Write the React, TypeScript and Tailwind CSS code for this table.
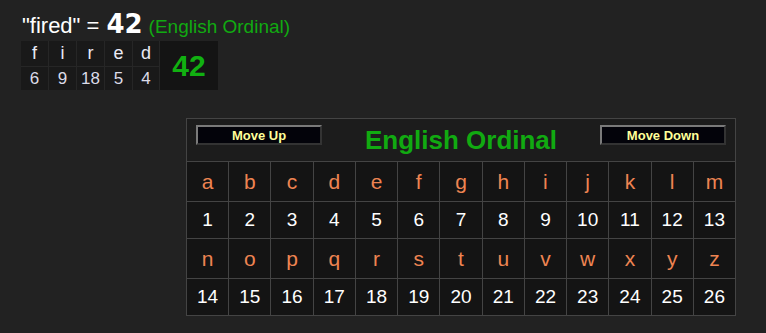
import React from 'react';

const letters = 'abcdefghijklmnopqrstuvwxyz'.split('');
const word = [
  { ch: 'f', v: 6 },
  { ch: 'i', v: 9 },
  { ch: 'r', v: 18 },
  { ch: 'e', v: 5 },
  { ch: 'd', v: 4 },
];

const Row = ({ items, kind }: { items: string[]; kind: 'letter' | 'num' }) => (
  <>
    {items.map((t, i) => (
      <div
        key={kind + i}
        className={
          kind === 'letter'
            ? 'bg-[#141414] h-[39px] flex items-center justify-center text-[21px] text-[#ee8452]'
            : 'bg-[#141414] h-[36px] flex items-center justify-center text-[19px] text-white'
        }
      >
        {t}
      </div>
    ))}
  </>
);

const App = () => {
  const first = letters.slice(0, 13);
  const second = letters.slice(13);
  return (
    <div className="w-[766px] h-[333px] bg-[#222222] text-white font-['Liberation_Sans',Arial,sans-serif] pl-[21px] pt-[5px] overflow-hidden">
      {/* title line */}
      <div className="flex items-baseline h-[31px] pl-px">
        <span className="text-[22px]">"fired" =</span>
        <span className="text-[26px] font-bold font-['DejaVu_Sans',sans-serif] ml-[7px]">42</span>
        <span className="text-[19px] text-[#11aa11] ml-[6px]">(English Ordinal)</span>
      </div>

      {/* word breakdown */}
      <div className="mt-[5px] flex w-fit bg-[#262626]">
        <div className="grid grid-cols-[27px_27px_27px_27px_26px] gap-px">
          {word.map((w) => (
            <div key={'c' + w.ch} className="bg-[#191919] h-[25px] flex items-center justify-center text-[18px] text-[#eaeaf5]">
              {w.ch}
            </div>
          ))}
          {word.map((w, i) => (
            <div key={'v' + i} className="bg-[#191919] h-[23px] flex items-center justify-center text-[17px] text-[#dcdce8]">
              {w.v}
            </div>
          ))}
        </div>
        <div className="ml-px w-[58px] bg-[#141414] flex items-center justify-center text-[30px] font-bold text-[#11b011]">
          42
        </div>
      </div>

      {/* cipher chart */}
      <div className="ml-[165px] mt-[28px] w-[550px] border border-[#444444] bg-[#444444]">
        <div className="h-[42px] bg-[#1c1c1c] flex items-start justify-between px-[9px] pt-[6px] mb-px">
          <button className="w-[126px] h-[20px] bg-[#03030a] border-2 border-t-[#7a7a7a] border-l-[#7a7a7a] border-b-[#333333] border-r-[#333333] text-[13px] font-bold text-[#ffff99] leading-none">
            Move Up
          </button>
          <div className="text-[26px] font-bold text-[#11aa11] leading-none pt-[2px]">English Ordinal</div>
          <button className="w-[126px] h-[20px] bg-[#03030a] border-2 border-t-[#7a7a7a] border-l-[#7a7a7a] border-b-[#333333] border-r-[#333333] text-[13px] font-bold text-[#ffff99] leading-none">
            Move Down
          </button>
        </div>
        <div className="grid grid-cols-13 gap-px">
          <Row items={first} kind="letter" />
          <Row items={first.map((_, i) => String(i + 1))} kind="num" />
          <Row items={second} kind="letter" />
          <Row items={second.map((_, i) => String(i + 14))} kind="num" />
        </div>
      </div>
    </div>
  );
};

export default App;
